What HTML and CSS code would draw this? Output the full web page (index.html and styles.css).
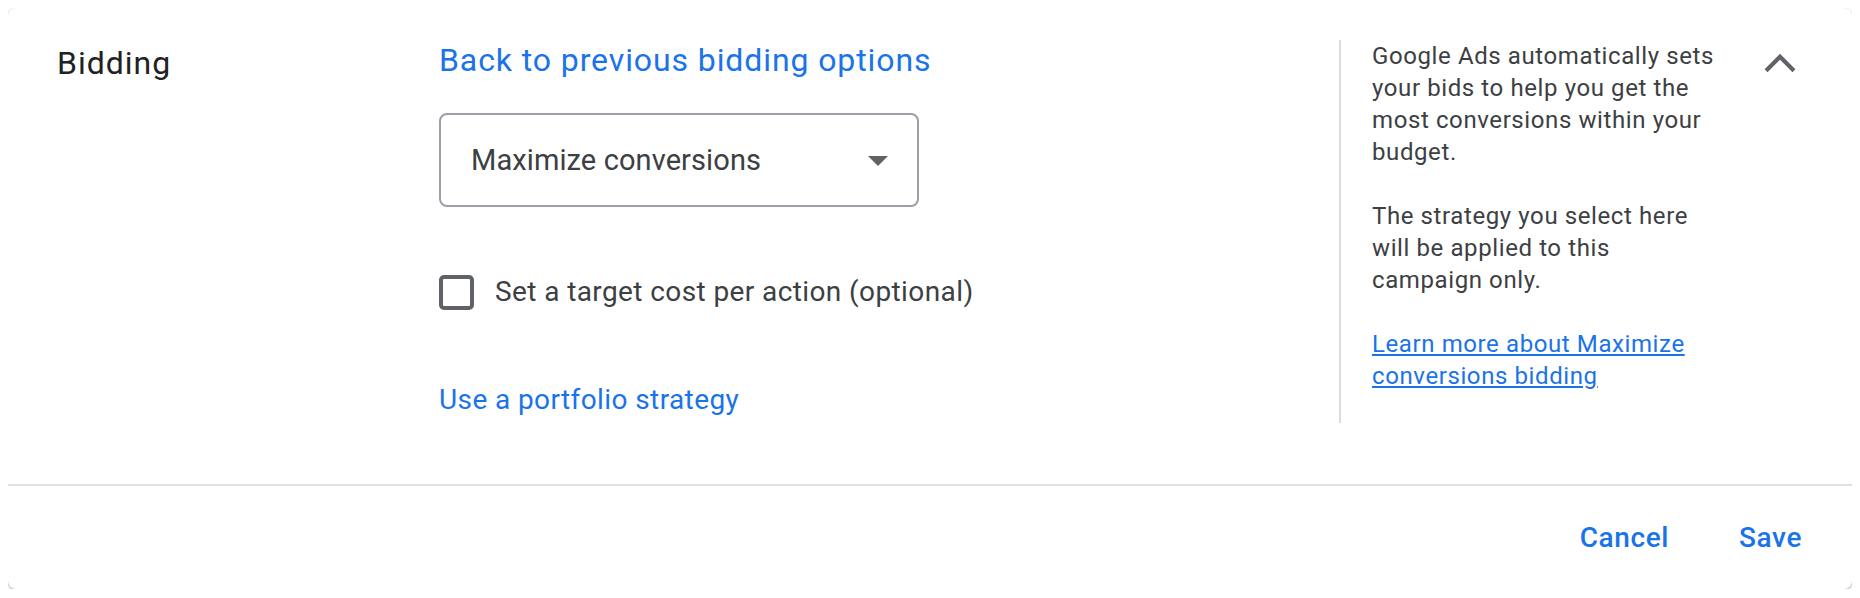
FILE: index.html
```html
<!DOCTYPE html>
<html lang="en">
<head>
    <meta charset="UTF-8">
    <meta name="viewport" content="width=device-width, initial-scale=1.0">
    <title>Bidding</title>
    <link rel="stylesheet" href="styles.css">
</head>
<body>
    <!-- Bidding edit card -->
    <div class="card">
        <div class="card-main">
            <div class="section-title">Bidding</div>

            <div class="section-body">
                <a href="#" class="back-link">Back to previous bidding options</a>

                <!-- Strategy dropdown -->
                <div class="dropdown">
                    <span class="dropdown-value">Maximize conversions</span>
                    <svg class="dropdown-arrow" viewBox="0 0 24 24" width="48" height="48">
                        <path d="M7 10l5 5 5-5z" fill="#5f6368"/>
                    </svg>
                </div>

                <!-- Target CPA checkbox -->
                <label class="check-row">
                    <span class="checkbox"></span>
                    <span class="check-label">Set a target cost per action (optional)</span>
                </label>

                <a href="#" class="portfolio-link">Use a portfolio strategy</a>
            </div>

            <!-- Help panel -->
            <div class="help-panel">
                <p>Google Ads automatically sets your bids to help you get the most conversions within your budget.</p>
                <p>The strategy you select here will be applied to this campaign only.</p>
                <p><a href="#" class="help-link">Learn more about Maximize conversions bidding</a></p>
            </div>

            <button class="collapse-btn" aria-label="Collapse">
                <svg viewBox="0 0 24 24" width="62" height="62">
                    <path d="M6.6 14.6L12 9.2l5.4 5.4" fill="none" stroke="#5f6368" stroke-width="1.6"/>
                </svg>
            </button>
        </div>

        <!-- Footer actions -->
        <div class="card-footer">
            <button class="text-btn">Cancel</button>
            <button class="text-btn">Save</button>
        </div>
    </div>
</body>
</html>
```

FILE: styles.css
```css
/* General Styles */
body {
    margin: 8px;
    font-family: Roboto, "Liberation Sans", Arial, sans-serif;
    background-color: #fff;
    color: #3c4043;
}

a {
    color: #1a73e8;
    text-decoration: none;
}

/* Card */
.card {
    height: 581px;
    display: flex;
    flex-direction: column;
    background: #fff;
    border-radius: 8px;
    box-shadow: 0 1px 2px rgba(60, 64, 67, 0.3), 0 1px 3px 1px rgba(60, 64, 67, 0.15);
}

.card-main {
    display: flex;
    padding: 32px 41px 61px 49px;
    border-bottom: 2px solid #e0e0e0;
}

.section-title {
    flex: 0 0 382px;
    font-size: 32px;
    line-height: 40px;
    padding-top: 3px;
    color: #202124;
    letter-spacing: 1px;
}

/* Main column */
.section-body {
    flex: 1;
    display: flex;
    flex-direction: column;
    align-items: flex-start;
    padding-bottom: 5px;
}

.back-link {
    font-size: 32px;
    line-height: 40px;
    letter-spacing: 0.9px;
}

.dropdown {
    margin-top: 33px;
    width: 480px;
    height: 94px;
    box-sizing: border-box;
    border: 2px solid #9aa0a6;
    border-radius: 8px;
    padding: 0 15px 0 30px;
    display: flex;
    align-items: center;
    justify-content: space-between;
}

.dropdown-value {
    font-size: 29px;
    color: #3c4043;
    letter-spacing: 0.1px;
}

.dropdown-arrow {
    display: block;
}

.check-row {
    margin-top: 67px;
    height: 36px;
    display: flex;
    align-items: center;
    cursor: pointer;
}

.checkbox {
    width: 35px;
    height: 35px;
    box-sizing: border-box;
    border: 4px solid #5f6368;
    border-radius: 5px;
}

.check-label {
    margin-left: 21px;
    font-size: 28px;
    line-height: 36px;
    letter-spacing: 0.4px;
}

.portfolio-link {
    margin-top: 72px;
    font-size: 28px;
    line-height: 36px;
    letter-spacing: 0.4px;
}

/* Help panel */
.help-panel {
    flex: 0 0 346px;
    border-left: 2px solid #dadce0;
    padding-left: 31px;
    font-size: 24px;
    line-height: 32px;
    letter-spacing: 0.6px;
}

.help-panel p {
    margin: 0 0 32px;
}

.help-panel p:last-child {
    margin-bottom: 0;
}

.help-link {
    text-decoration: underline;
}

.collapse-btn {
    align-self: flex-start;
    margin: -7px 0 0 31px;
    padding: 0;
    border: none;
    background: none;
    cursor: pointer;
}

.collapse-btn svg {
    display: block;
}

/* Footer */
.card-footer {
    flex: 1;
    display: flex;
    justify-content: flex-end;
    align-items: center;
    gap: 38px;
    padding-right: 34px;
}

.text-btn {
    font-family: Roboto, "Liberation Sans", Arial, sans-serif;
    font-size: 28px;
    font-weight: 500;
    color: #1a73e8;
    background: none;
    border: none;
    padding: 12px 16px;
    cursor: pointer;
    letter-spacing: 0.6px;
}
```
